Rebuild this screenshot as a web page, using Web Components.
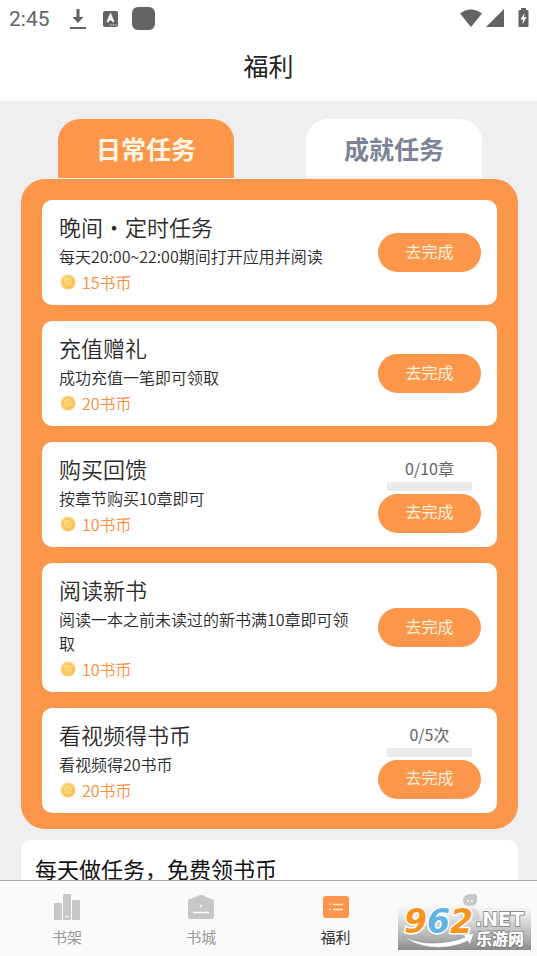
<!DOCTYPE html>
<html lang="zh-CN">
<head>
<meta charset="utf-8">
<meta name="viewport" content="width=device-width, initial-scale=1">
<title>福利</title>
<style>
  html, body { margin: 0; height: 100%; }
  body { font-family: "Noto Sans CJK SC", sans-serif; background: #efefef; color: #333; }
</style>
</head>
<body>
<welfare-app></welfare-app>
<script>
const define = (name, html, setup) => {
  const tpl = document.createElement('template');
  tpl.innerHTML = html;
  customElements.define(name, class extends HTMLElement {
    constructor() {
      super();
      this.attachShadow({ mode: 'open' }).append(tpl.content.cloneNode(true));
    }
    connectedCallback() { if (setup) setup(this, this.shadowRoot); }
  });
};

define('status-bar', `
<style>
  :host { display: flex; align-items: center; height: 37px; padding: 0 8px 0 9px; color: #636363; font: 21px/24px Roboto, sans-serif; }
  svg { display: block; fill: currentColor; }
  .left { margin-left: 20px; }
  .right { margin-left: auto; }
</style>
<span>2:45</span>
<svg class="left" width="86" height="24" viewBox="0 0 86 24" aria-hidden="true">
  <path d="M6.500 2h3v8h4l-5.500 6-5.500-6h4zM0 20h16v2H0z"/>
  <rect x="33" y="4" width="15" height="16" rx="2"/>
  <path d="M37.500 15 40.500 8l3 7M38.500 12.500h4" fill="none" stroke="#fff" stroke-width="2"/>
  <path d="M40 18h1.500M42.500 18H44M45 18h1.500" stroke="#fff" stroke-width="1"/>
  <rect x="62" y="0" width="23" height="23" rx="6"/>
</svg>
<svg class="right" width="69" height="24" viewBox="0 0 69 24" aria-hidden="true">
  <path d="M0 6.500Q11 -1.500 22 6.500L11 20zM26 20 44 2v18zM59.500 3H61V1h5v2h1.500q1 0 1 1v15q0 1-1 1h-8q-1 0-1-1V4q0-1 1-1z"/>
  <path d="M64.500 6 60.500 12.500h2.500l-.5 5 4-7.500h-2.500z" fill="#fff"/>
</svg>`);

define('page-title', `
<style>
  :host { display: block; padding: 10px 0 18px; }
  h1 { margin: 0; font-size: 25px; line-height: 36px; font-weight: 400; text-align: center; color: #222; }
</style>
<h1><slot></slot></h1>`);

define('task-tab', `
<style>
  :host { display: block; width: 176px; }
  button { display: block; width: 100%; height: 59px; border: 0; padding: 0 0 2px; border-radius: 22px 22px 0 0; background: #fff; color: #7d8396; font: bold 25px/36px "Noto Sans CJK SC", sans-serif; }
  :host([selected]) button { background: #fb964a; color: #fff6e4; }
</style>
<button type="button" role="tab"><slot></slot></button>`,
(host, root) => root.querySelector('button').setAttribute('aria-selected', host.hasAttribute('selected')));

define('coin-icon', `
<style>:host { display: block; width: 16px; height: 16px; } svg { display: block; }</style>
<svg width="16" height="16" viewBox="0 0 16 16" aria-hidden="true">
  <defs><linearGradient id="g" x1="0" y1="0" x2="1" y2="1"><stop offset="0" stop-color="#ffe08a"/><stop offset="1" stop-color="#f7bd58"/></linearGradient></defs>
  <circle cx="8" cy="8" r="7.500" fill="url(#g)"/>
  <circle cx="8" cy="8" r="5" fill="#fdd06c" stroke="#f6be55"/>
  <path d="M4.500 7A4 4 0 0 1 9 4.300" fill="none" stroke="#ffe9a8"/>
</svg>`);

define('task-progress', `
<style>
  :host { display: flex; flex-direction: column; align-items: center; gap: 3px; margin-bottom: 3px; }
  label { font-size: 16px; line-height: 22px; color: #666; }
  progress { appearance: none; display: block; width: 85px; height: 9px; border: 0; background: #ebebeb; }
  progress::-webkit-progress-bar { background: #ebebeb; }
  progress::-webkit-progress-value { background: #fb964a; }
</style>
<label for="p"></label><progress id="p" value="0"></progress>`,
(host, root) => {
  const max = host.getAttribute('max');
  root.querySelector('label').textContent = '0/' + max + host.getAttribute('unit');
  root.querySelector('progress').max = Number(max);
});

define('task-card', `
<style>
  :host { display: flex; align-items: center; gap: 20px; padding: 0 16px 0 17px; background: #fff; border-radius: 10px; }
  .info { flex: 1; min-width: 0; padding: 10px 0; font-weight: 350; }
  h2 { margin: 0 0 2px; font-size: 22px; line-height: 32px; font-weight: 350; color: #2a2a2a; }
  p { margin: 0; font-size: 16px; line-height: 24px; color: #2a2a2a; }
  .reward { display: flex; align-items: center; gap: 6px; padding: 1px 0 0 1px; line-height: 26px; color: #fb8d3c; }
  .action { flex: none; width: 103px; }
  button { display: block; width: 100%; height: 39px; border: 0; border-radius: 20px; padding: 0 0 4px; background: #fb964a; color: #fff1dc; font: 16px/24px "Noto Sans CJK SC", sans-serif; }
</style>
<div class="info">
  <h2><slot name="title"></slot></h2>
  <p><slot></slot></p>
  <p class="reward"><coin-icon></coin-icon><slot name="reward"></slot></p>
</div>
<div class="action"><slot name="progress"></slot><button type="button">去完成</button></div>`);

define('task-panel', `
<style>
  :host { display: flex; flex-direction: column; gap: 16px; padding: 21px 21px 16px; border-radius: 24px; background: #fb964a; margin-top: 1px; }
</style>
<slot></slot>`);

define('promo-card', `
<style>
  :host { display: block; margin-top: 11px; padding: 12px 14px; border-radius: 10px; background: #fff; }
  h2 { margin: 0; font-size: 22px; line-height: 32px; font-weight: 400; color: #111; }
</style>
<h2><slot></slot></h2>`);

define('nav-item', `
<style>
  :host { display: block; flex: 1; }
  a { display: flex; flex-direction: column; align-items: center; gap: 3px; padding: 12px 0 8px; font-size: 15px; line-height: 22px; color: #999; text-decoration: none; }
  :host([current]) a { color: #333; }
</style>
<a href="#"><slot name="icon"></slot><slot></slot></a>`);

define('site-badge', `
<style>:host { display: block; position: absolute; right: 6px; bottom: 6px; } svg { display: block; }</style>
<svg width="133" height="45" viewBox="0 0 133 45">
  <defs>
    <linearGradient id="bg" x1="0" y1="0" x2="0" y2="1"><stop offset="0" stop-color="#f8f8f8" stop-opacity=".5"/><stop offset=".35" stop-color="#cfcfcf" stop-opacity=".75"/><stop offset="1" stop-color="#858585" stop-opacity=".95"/></linearGradient>
  </defs>
  <rect width="133" height="45" fill="url(#bg)"/>
  <path d="M6 31Q20 39 38 38 56 37 67 32L64 30 76 28 72 40 70 36Q53 44 33 42 15 40 6 31z" fill="#fff" stroke="#8d8d8d" stroke-width=".6"/>
  <text x="6" y="28" font-family="DejaVu Sans, sans-serif" font-weight="700" font-style="italic" font-size="33" stroke="#fff" stroke-width="3" paint-order="stroke" stroke-linejoin="round" fill="#f7941d">9<tspan fill="#5fb3e6">6</tspan>2</text>
  <g fill="#fff" stroke="#777" stroke-width="1.500" paint-order="stroke">
    <text x="77" y="21" font-family="DejaVu Sans, sans-serif" font-weight="700" font-size="19">.NET</text>
    <text x="78" y="40" font-family="Noto Sans CJK SC, sans-serif" font-weight="900" font-size="16">乐游网</text>
  </g>
</svg>`);

define('bottom-nav', `
<style>
  :host { display: block; position: relative; background: #fafafa; border-top: 1px solid #aaa; flex: none; }
  nav { display: flex; }
  svg { display: block; }
</style>
<nav>
  <nav-item><svg slot="icon" width="30" height="30" viewBox="0 0 30 30" fill="#c7c7c7" aria-hidden="true"><rect x="2" y="10" width="8" height="17" rx="1"/><rect x="11" y="1" width="8" height="26" rx="1"/><rect x="20" y="7" width="8" height="20" rx="1"/><path d="M13.500 23.500h3" stroke="#fff"/></svg>书架</nav-item>
  <nav-item><svg slot="icon" width="30" height="30" viewBox="0 0 30 30" fill="#c7c7c7" aria-hidden="true"><path d="M3 6.500 13.500 2.200q1.500-.6 3 0L27 6.500q1 .4 1 1.500v16q0 2-2 2H4q-2 0-2-2V8q0-1.100 1-1.500z"/><path d="M7 19.500h16M14 13h2" stroke="#fff" stroke-width="1.500"/></svg>书城</nav-item>
  <nav-item current><svg slot="icon" width="30" height="30" viewBox="0 0 30 30" aria-hidden="true"><rect x="2" y="3" width="26" height="22" rx="3" fill="#fb964a"/><path d="M8 11.500h1.500M12 11.500h10M8 16.500h1.500M12 16.500h10" stroke="#ffe9d2" stroke-width="1.500"/></svg>福利</nav-item>
  <nav-item><svg slot="icon" width="30" height="30" viewBox="0 0 30 30" fill="#c7c7c7" aria-hidden="true"><path d="M15 1h5q2 0 2 2v5a7 6.500 0 1 1-7-7z"/><path d="M12 8h2M16 8h2" stroke="#fff" stroke-width="1.500"/><path d="M7 27q-2 0-2-2 1-10 10-10t10 10q0 2-2 2z"/></svg>我的</nav-item>
</nav>
<site-badge></site-badge>`);

define('welfare-app', `
<style>
  :host { display: flex; flex-direction: column; height: 100vh; overflow: hidden; }
  header { background: #fff; flex: none; }
  main { flex: 1; min-height: 0; overflow-y: auto; scrollbar-width: none; padding: 18px 19px 0 21px; }
  .tabs { display: flex; justify-content: space-between; padding: 0 36px 0 37px; }
</style>
<header><status-bar></status-bar><page-title>福利</page-title></header>
<main>
  <div class="tabs" role="tablist"><task-tab selected>日常任务</task-tab><task-tab>成就任务</task-tab></div>
  <task-panel>
    <task-card><span slot="title">晚间·定时任务</span>每天20:00~22:00期间打开应用并阅读<span slot="reward">15书币</span></task-card>
    <task-card><span slot="title">充值赠礼</span>成功充值一笔即可领取<span slot="reward">20书币</span></task-card>
    <task-card><span slot="title">购买回馈</span>按章节购买10章即可<span slot="reward">10书币</span><task-progress slot="progress" max="10" unit="章"></task-progress></task-card>
    <task-card><span slot="title">阅读新书</span>阅读一本之前未读过的新书满10章即可领取<span slot="reward">10书币</span></task-card>
    <task-card><span slot="title">看视频得书币</span>看视频得20书币<span slot="reward">20书币</span><task-progress slot="progress" max="5" unit="次"></task-progress></task-card>
  </task-panel>
  <promo-card>每天做任务，免费领书币</promo-card>
</main>
<bottom-nav></bottom-nav>`);
</script>
</body>
</html>
